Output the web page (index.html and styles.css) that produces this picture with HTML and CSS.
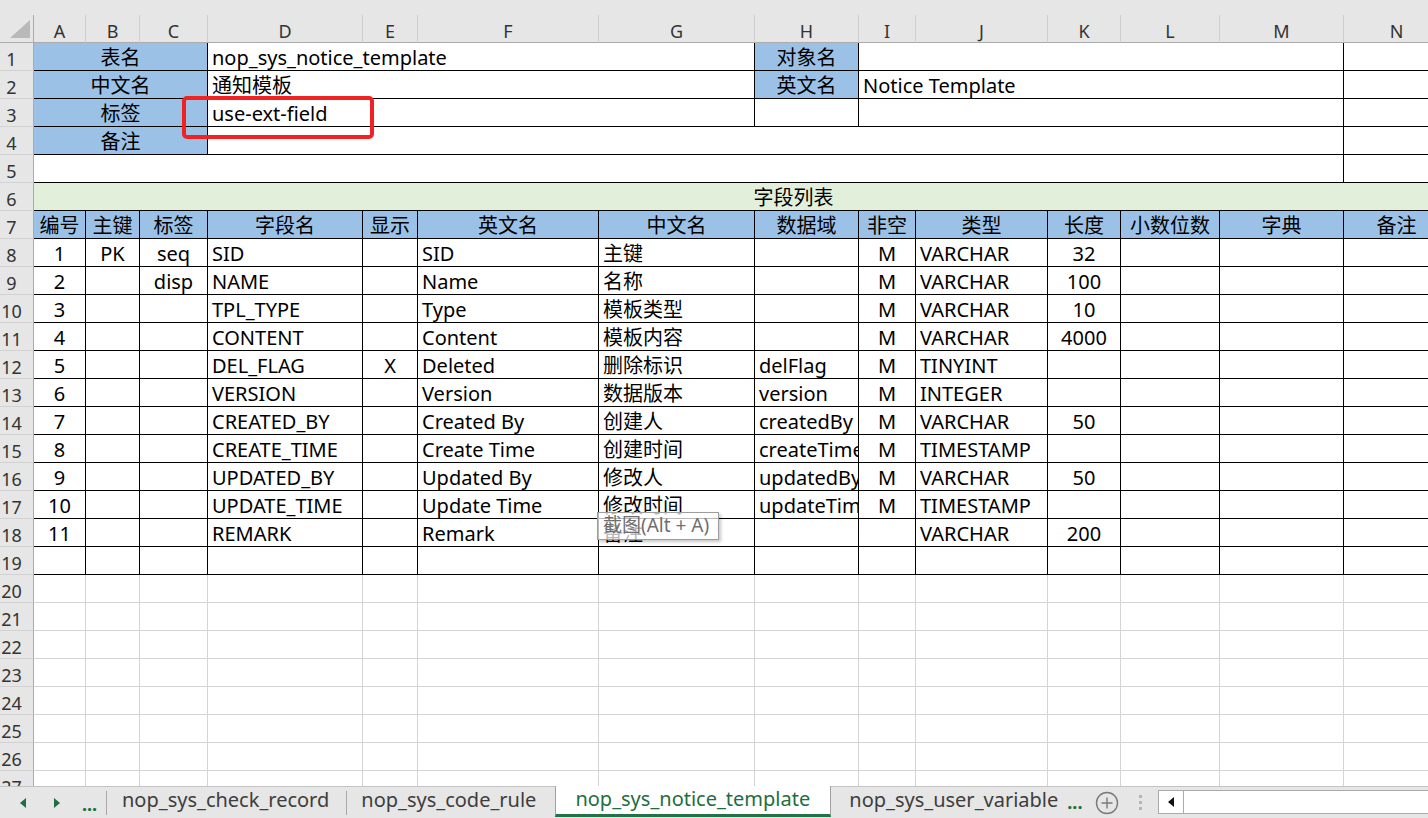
FILE: index.html
```html
<!DOCTYPE html>
<html>
<head>
<meta charset="utf-8">
<link rel="stylesheet" href="styles.css">
</head>
<body>
<div class="top"></div>
<div class="sheet">
  <div class="corner"><svg width="34" height="27" viewBox="0 0 34 27"><polygon points="10,23 30,23 30,5" fill="#b9b9b9"/></svg></div>
  <div class="ch">A</div><div class="ch">B</div><div class="ch">C</div><div class="ch">D</div><div class="ch">E</div><div class="ch">F</div><div class="ch">G</div><div class="ch">H</div><div class="ch">I</div><div class="ch">J</div><div class="ch">K</div><div class="ch">L</div><div class="ch">M</div><div class="ch">N</div>

  <div class="rh">1</div>
  <div class="c bl ct s3">表名</div><div class="c s4">nop_sys_notice_template</div><div class="c bl ct">对象名</div><div class="c s5"></div><div class="c"></div>
  <div class="rh">2</div>
  <div class="c bl ct s3">中文名</div><div class="c s4">通知模板</div><div class="c bl ct">英文名</div><div class="c s5">Notice Template</div><div class="c"></div>
  <div class="rh">3</div>
  <div class="c bl ct s3">标签</div><div class="c s4">use-ext-field</div><div class="c"></div><div class="c s5"></div><div class="c"></div>
  <div class="rh">4</div>
  <div class="c bl ct s3">备注</div><div class="c s10"></div><div class="c"></div>
  <div class="rh">5</div>
  <div class="c s13"></div><div class="c"></div>
  <div class="rh">6</div>
  <div class="c gr ct s15">字段列表</div>
  <div class="rh">7</div>
  <div class="c bl ct">编号</div><div class="c bl ct">主键</div><div class="c bl ct">标签</div><div class="c bl ct">字段名</div><div class="c bl ct">显示</div><div class="c bl ct">英文名</div><div class="c bl ct">中文名</div><div class="c bl ct">数据域</div><div class="c bl ct">非空</div><div class="c bl ct">类型</div><div class="c bl ct">长度</div><div class="c bl ct">小数位数</div><div class="c bl ct">字典</div><div class="c bl ct">备注</div>

  <div class="rh">8</div>
  <div class="c ct">1</div><div class="c ct">PK</div><div class="c ct">seq</div><div class="c">SID</div><div class="c ct"></div><div class="c">SID</div><div class="c">主键</div><div class="c"></div><div class="c ct">M</div><div class="c">VARCHAR</div><div class="c ct">32</div><div class="c"></div><div class="c"></div><div class="c"></div>
  <div class="rh">9</div>
  <div class="c ct">2</div><div class="c ct"></div><div class="c ct">disp</div><div class="c">NAME</div><div class="c ct"></div><div class="c">Name</div><div class="c">名称</div><div class="c"></div><div class="c ct">M</div><div class="c">VARCHAR</div><div class="c ct">100</div><div class="c"></div><div class="c"></div><div class="c"></div>
  <div class="rh">10</div>
  <div class="c ct">3</div><div class="c ct"></div><div class="c ct"></div><div class="c">TPL_TYPE</div><div class="c ct"></div><div class="c">Type</div><div class="c">模板类型</div><div class="c"></div><div class="c ct">M</div><div class="c">VARCHAR</div><div class="c ct">10</div><div class="c"></div><div class="c"></div><div class="c"></div>
  <div class="rh">11</div>
  <div class="c ct">4</div><div class="c ct"></div><div class="c ct"></div><div class="c">CONTENT</div><div class="c ct"></div><div class="c">Content</div><div class="c">模板内容</div><div class="c"></div><div class="c ct">M</div><div class="c">VARCHAR</div><div class="c ct">4000</div><div class="c"></div><div class="c"></div><div class="c"></div>
  <div class="rh">12</div>
  <div class="c ct">5</div><div class="c ct"></div><div class="c ct"></div><div class="c">DEL_FLAG</div><div class="c ct">X</div><div class="c">Deleted</div><div class="c">删除标识</div><div class="c">delFlag</div><div class="c ct">M</div><div class="c">TINYINT</div><div class="c ct"></div><div class="c"></div><div class="c"></div><div class="c"></div>
  <div class="rh">13</div>
  <div class="c ct">6</div><div class="c ct"></div><div class="c ct"></div><div class="c">VERSION</div><div class="c ct"></div><div class="c">Version</div><div class="c">数据版本</div><div class="c">version</div><div class="c ct">M</div><div class="c">INTEGER</div><div class="c ct"></div><div class="c"></div><div class="c"></div><div class="c"></div>
  <div class="rh">14</div>
  <div class="c ct">7</div><div class="c ct"></div><div class="c ct"></div><div class="c">CREATED_BY</div><div class="c ct"></div><div class="c">Created By</div><div class="c">创建人</div><div class="c">createdBy</div><div class="c ct">M</div><div class="c">VARCHAR</div><div class="c ct">50</div><div class="c"></div><div class="c"></div><div class="c"></div>
  <div class="rh">15</div>
  <div class="c ct">8</div><div class="c ct"></div><div class="c ct"></div><div class="c">CREATE_TIME</div><div class="c ct"></div><div class="c">Create Time</div><div class="c">创建时间</div><div class="c">createTime</div><div class="c ct">M</div><div class="c">TIMESTAMP</div><div class="c ct"></div><div class="c"></div><div class="c"></div><div class="c"></div>
  <div class="rh">16</div>
  <div class="c ct">9</div><div class="c ct"></div><div class="c ct"></div><div class="c">UPDATED_BY</div><div class="c ct"></div><div class="c">Updated By</div><div class="c">修改人</div><div class="c">updatedBy</div><div class="c ct">M</div><div class="c">VARCHAR</div><div class="c ct">50</div><div class="c"></div><div class="c"></div><div class="c"></div>
  <div class="rh">17</div>
  <div class="c ct">10</div><div class="c ct"></div><div class="c ct"></div><div class="c">UPDATE_TIME</div><div class="c ct"></div><div class="c">Update Time</div><div class="c">修改时间</div><div class="c">updateTime</div><div class="c ct">M</div><div class="c">TIMESTAMP</div><div class="c ct"></div><div class="c"></div><div class="c"></div><div class="c"></div>
  <div class="rh">18</div>
  <div class="c ct">11</div><div class="c ct"></div><div class="c ct"></div><div class="c">REMARK</div><div class="c ct"></div><div class="c">Remark</div><div class="c">备注</div><div class="c"></div><div class="c ct"></div><div class="c">VARCHAR</div><div class="c ct">200</div><div class="c"></div><div class="c"></div><div class="c"></div>
  <div class="rh">19</div>
  <div class="c"></div><div class="c"></div><div class="c"></div><div class="c"></div><div class="c"></div><div class="c"></div><div class="c"></div><div class="c"></div><div class="c"></div><div class="c"></div><div class="c"></div><div class="c"></div><div class="c"></div><div class="c"></div>

  <div class="rh">20</div>
  <div class="g"></div><div class="g"></div><div class="g"></div><div class="g"></div><div class="g"></div><div class="g"></div><div class="g"></div><div class="g"></div><div class="g"></div><div class="g"></div><div class="g"></div><div class="g"></div><div class="g"></div><div class="g"></div>
  <div class="rh">21</div>
  <div class="g"></div><div class="g"></div><div class="g"></div><div class="g"></div><div class="g"></div><div class="g"></div><div class="g"></div><div class="g"></div><div class="g"></div><div class="g"></div><div class="g"></div><div class="g"></div><div class="g"></div><div class="g"></div>
  <div class="rh">22</div>
  <div class="g"></div><div class="g"></div><div class="g"></div><div class="g"></div><div class="g"></div><div class="g"></div><div class="g"></div><div class="g"></div><div class="g"></div><div class="g"></div><div class="g"></div><div class="g"></div><div class="g"></div><div class="g"></div>
  <div class="rh">23</div>
  <div class="g"></div><div class="g"></div><div class="g"></div><div class="g"></div><div class="g"></div><div class="g"></div><div class="g"></div><div class="g"></div><div class="g"></div><div class="g"></div><div class="g"></div><div class="g"></div><div class="g"></div><div class="g"></div>
  <div class="rh">24</div>
  <div class="g"></div><div class="g"></div><div class="g"></div><div class="g"></div><div class="g"></div><div class="g"></div><div class="g"></div><div class="g"></div><div class="g"></div><div class="g"></div><div class="g"></div><div class="g"></div><div class="g"></div><div class="g"></div>
  <div class="rh">25</div>
  <div class="g"></div><div class="g"></div><div class="g"></div><div class="g"></div><div class="g"></div><div class="g"></div><div class="g"></div><div class="g"></div><div class="g"></div><div class="g"></div><div class="g"></div><div class="g"></div><div class="g"></div><div class="g"></div>
  <div class="rh">26</div>
  <div class="g"></div><div class="g"></div><div class="g"></div><div class="g"></div><div class="g"></div><div class="g"></div><div class="g"></div><div class="g"></div><div class="g"></div><div class="g"></div><div class="g"></div><div class="g"></div><div class="g"></div><div class="g"></div>
  <div class="rh">27</div>
  <div class="g"></div><div class="g"></div><div class="g"></div><div class="g"></div><div class="g"></div><div class="g"></div><div class="g"></div><div class="g"></div><div class="g"></div><div class="g"></div><div class="g"></div><div class="g"></div><div class="g"></div><div class="g"></div>
</div>

<div class="tabbar">
  <div class="nav">
    <span class="arr arr-l"></span>
    <span class="arr arr-r"></span>
    <span class="more">...</span>
  </div>
  <div class="sep"></div>
  <div class="tab t1">nop_sys_check_record</div>
  <div class="sep"></div>
  <div class="tab t2">nop_sys_code_rule</div>
  <div class="tab active">nop_sys_notice_template</div>
  <div class="tab t4">nop_sys_user_variable</div>
  <span class="more more2">...</span>
  <div class="add"><svg width="24" height="24" viewBox="0 0 24 24"><circle cx="12" cy="12" r="10.5" fill="none" stroke="#7a7a7a" stroke-width="1.4"/><path d="M12 6.5v11M6.5 12h11" stroke="#7a7a7a" stroke-width="1.4"/></svg></div>
  <div class="dots"><i></i><i></i><i></i></div>
  <div class="hscroll">
    <div class="hbtn"><span class="tri"></span></div>
    <div class="htrack"></div>
  </div>
</div>

<div class="redbox"></div>
<div class="tip">截图(Alt + A)</div>
</body>
</html>
```

FILE: styles.css
```css
html, body {
  margin: 0;
  padding: 0;
}
body {
  width: 1428px;
  height: 818px;
  overflow: hidden;
  position: relative;
  background: #e6e6e6;
  font-family: "Noto Sans", "Noto Sans CJK SC", sans-serif;
  color: #000;
}
.top {
  height: 15px;
  background: #e6e6e6;
}
.sheet {
  display: grid;
  grid-template-columns: 34px 52px 54px 68px 155px 55px 181px 156px 104px 57px 132px 73px 99px 124px 106px 104px;
  grid-template-rows: 28px;
  grid-auto-rows: 28px;
  width: 1428px;
  height: 771px;
  overflow: hidden;
  background: #fff;
}
.corner {
  background: #e6e6e6;
  border-right: 1px solid #ababab;
  border-bottom: 1px solid #ababab;
  box-sizing: border-box;
  overflow: hidden;
}
.corner svg { display: block; }
.ch {
  background: #e6e6e6;
  border-right: 1px solid #cfcfcf;
  border-bottom: 1px solid #ababab;
  box-sizing: border-box;
  text-align: center;
  font-size: 18px;
  line-height: 26px;
  padding-top: 3px;
  color: #333;
  overflow: hidden;
}
.rh {
  grid-column: 1;
  background: #e6e6e6;
  border-right: 1px solid #ababab;
  border-bottom: 1px solid #d2d2d2;
  box-sizing: border-box;
  font-size: 18px;
  line-height: 26px;
  padding-top: 3px;
  padding-right: 10px;
  text-align: center;
  color: #333;
  overflow: hidden;
  white-space: nowrap;
}
.c, .g {
  box-sizing: border-box;
  font-size: 20px;
  line-height: 26px;
  padding: 2px 4px 0 4px;
  white-space: nowrap;
  overflow: hidden;
}
.c {
  border-right: 1px solid #000;
  border-bottom: 1px solid #000;
}
.g {
  border-right: 1px solid #d4d4d4;
  border-bottom: 1px solid #d4d4d4;
}
.ct { text-align: center; padding-left: 0; padding-right: 0; }
.bl { background: #9bc2e6; }
.gr { background: #e2efda; }
.s3 { grid-column: span 3; }
.s4 { grid-column: span 4; }
.s5 { grid-column: span 5; }
.s10 { grid-column: span 10; }
.s13 { grid-column: span 13; }
.s15 { grid-column: span 15; }

/* tab bar */
.tabbar {
  height: 32px;
  box-sizing: border-box;
  border-top: 1px solid #c3c3c3;
  background: #e6e6e6;
  display: flex;
  align-items: center;
  font-size: 20px;
  color: #3d3d3d;
  white-space: nowrap;
}
.nav {
  width: 106px;
  height: 100%;
  position: relative;
  display: flex;
  align-items: center;
}
.arr {
  width: 0;
  height: 0;
  border-top: 5px solid transparent;
  border-bottom: 5px solid transparent;
}
.arr-l {
  border-right: 6px solid #1e6e3e;
  margin-left: 20px;
}
.arr-r {
  border-left: 6px solid #1e6e3e;
  margin-left: 28px;
}
.more {
  color: #1e6e3e;
  font-weight: bold;
  font-size: 18px;
  line-height: 1;
  margin-left: 22px;
  position: relative;
  top: 1px;
}
.sep {
  width: 1px;
  height: 24px;
  background: #a8a8a8;
  flex: none;
}
.tab {
  height: 100%;
  display: flex;
  align-items: center;
  box-sizing: border-box;
  line-height: 1;
  padding-bottom: 6px;
}
.t1 { padding-left: 15px; padding-right: 17px; }
.t2 { padding-left: 14px; padding-right: 19px; }
.active {
  background: #fff;
  color: #1e6e3e;
  height: 31px;
  margin-top: -1px;
  align-self: flex-start;
  border-left: 1px solid #a0a0a0;
  border-right: 1px solid #a0a0a0;
  border-bottom: 3px solid #217346;
  padding-left: 19px;
  padding-right: 20px;
  padding-bottom: 3px;
}
.t4 { padding-left: 18px; padding-right: 0; }
.more2 { margin-left: 9px; top: -1px; }
.add {
  margin-left: 13px;
  width: 24px;
  height: 24px;
  position: relative;
  top: 0;
}
.add svg { display: block; }
.dots {
  margin-left: 20px;
  width: 3px;
  display: flex;
  flex-direction: column;
  gap: 3px;
}
.dots i {
  display: block;
  width: 3px;
  height: 3px;
  background: #b5b5b5;
}
.hscroll {
  margin-left: 16px;
  flex: 1;
  height: 24px;
  box-sizing: border-box;
  border: 1px solid #ababab;
  border-right: none;
  background: #fff;
  display: flex;
  position: relative;
  top: -1px;
}
.hbtn {
  width: 25px;
  height: 100%;
  box-sizing: border-box;
  border-right: 1px solid #ababab;
  display: flex;
  align-items: center;
  justify-content: center;
}
.tri {
  width: 0;
  height: 0;
  border-top: 5px solid transparent;
  border-bottom: 5px solid transparent;
  border-right: 6px solid #111;
}
.htrack { flex: 1; }

/* overlays */
.redbox {
  position: absolute;
  left: 182px;
  top: 96px;
  width: 192px;
  height: 43px;
  box-sizing: border-box;
  border: 4px solid #f32222;
  border-radius: 5px;
}
.tip {
  position: absolute;
  left: 597px;
  top: 512px;
  width: 122px;
  height: 28px;
  box-sizing: border-box;
  border: 1px solid #9d9d9d;
  background: rgba(255, 255, 255, 0.72);
  box-shadow: 2px 2px 3px rgba(0, 0, 0, 0.22);
  font-size: 19px;
  line-height: 24px;
  padding-left: 5px;
  color: #6f6f6f;
  white-space: nowrap;
}
```
